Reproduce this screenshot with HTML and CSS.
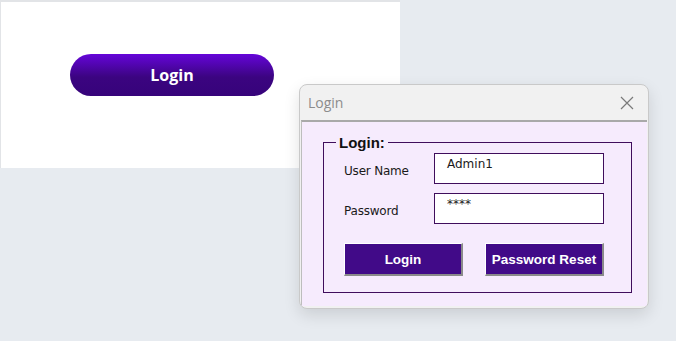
FILE: index.html
```html
<!DOCTYPE html>
<html lang="en">
<head>
    <meta charset="UTF-8">
    <meta name="viewport" content="width=device-width, initial-scale=1.0">
    <title>Login</title>
    <link rel="stylesheet" href="styles.css">
</head>
<body>
    <div class="sheet">
        <button class="pill-button">Login</button>
    </div>

    <div class="dialog">
        <div class="dialog-title">
            <span>Login</span>
            <svg class="close" width="14" height="14" viewBox="0 0 14 14">
                <path d="M1 1 L13 13 M13 1 L1 13" stroke="#7a7a7a" stroke-width="1.2" fill="none"/>
            </svg>
        </div>
        <div class="dialog-body">
            <fieldset class="login-box">
                <legend>Login:</legend>
                <div class="row">
                    <label>User Name</label>
                    <div class="field">Admin1</div>
                </div>
                <div class="row">
                    <label>Password</label>
                    <div class="field">****</div>
                </div>
                <div class="actions">
                    <button class="form-button">Login</button>
                    <button class="form-button">Password Reset</button>
                </div>
            </fieldset>
        </div>
    </div>
</body>
</html>
```

FILE: styles.css
```css
body {
    margin: 0;
    background: #e7ebf0;
    height: 341px;
    overflow: hidden;
    position: relative;
    font-family: "DejaVu Sans", sans-serif;
}
.sheet {
    width: 400px;
    height: 168px;
    background: #ffffff;
    border-top: 2px solid #e2e4e7;
    border-left: 1px solid #e2e4e7;
    padding-top: 52px;
    padding-left: 69px;
    box-sizing: border-box;
}
.pill-button {
    width: 204px;
    height: 42px;
    border: none;
    border-radius: 21px;
    background: linear-gradient(180deg, #6505d9, #3b0480 55%, #36037a);
    color: #ffffff;
    font-family: "Open Sans", sans-serif;
    font-weight: 700;
    font-size: 16px;
    cursor: pointer;
}
.dialog {
    position: absolute;
    left: 299px;
    top: 84px;
    width: 350px;
    height: 225px;
    background: #f1f1f1;
    border: 1px solid #c9c9c9;
    border-radius: 8px;
    box-sizing: border-box;
    box-shadow: 0 6px 16px rgba(0, 0, 0, 0.12);
    display: flex;
    flex-direction: column;
    overflow: hidden;
}
.dialog-title {
    height: 35px;
    display: flex;
    align-items: center;
    justify-content: space-between;
    padding: 0 14px 0 8px;
    font-family: "Open Sans", sans-serif;
    font-size: 14px;
    color: #8c8c8c;
}
.close {
    margin-top: 1px;
}
.dialog-body {
    flex: 1;
    margin: 0 1px 2px 1px;
    background: #f6ebfd;
    border-top: 2px solid #a9a9a9;
    border-left: 1px solid #bdbdbd;
    padding: 12px 15px 13px 21px;
    box-sizing: border-box;
}
.login-box {
    margin: 0;
    height: 100%;
    box-sizing: border-box;
    border: 1px solid #3f0d5c;
    padding: 2px 27px 0 20px;
}
.login-box legend {
    font-family: "Liberation Sans", sans-serif;
    font-weight: 700;
    font-size: 15px;
    color: #111111;
    padding: 0 3px;
    margin-left: -8px;
}
.row {
    display: flex;
    align-items: center;
    height: 30px;
    margin-bottom: 10px;
}
.row label {
    width: 90px;
    font-size: 12px;
    color: #1a1a1a;
    letter-spacing: -0.2px;
    padding-top: 6px;
}
.field {
    width: 170px;
    height: 31px;
    background: #ffffff;
    border: 1px solid #3f0d5c;
    box-sizing: border-box;
    padding: 3px 12px;
    font-size: 12px;
    color: #1a1a1a;
}
.actions {
    display: flex;
    justify-content: space-between;
    margin-top: 20px;
}
.form-button {
    width: 119px;
    height: 33px;
    background: #410a88;
    color: #ffffff;
    font-family: "Liberation Sans", sans-serif;
    font-weight: 700;
    font-size: 13.5px;
    border-top: 1px solid #ffffff;
    border-left: 1px solid #ffffff;
    border-right: 2px solid #8a8a8a;
    border-bottom: 2px solid #8a8a8a;
    padding: 0;
    cursor: pointer;
}
```
